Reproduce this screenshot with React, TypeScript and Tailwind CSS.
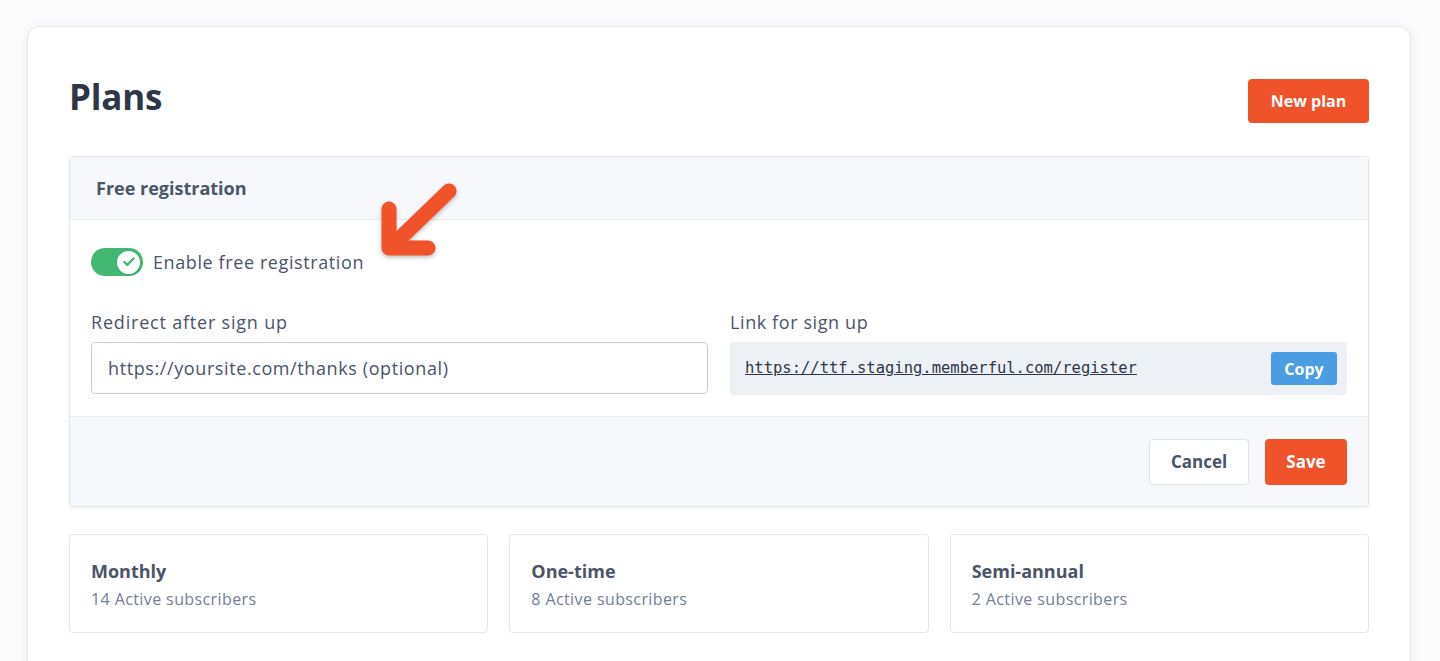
import { Check } from "lucide-react";

const plans = [
  { name: "Monthly", subs: "14 Active subscribers" },
  { name: "One-time", subs: "8 Active subscribers" },
  { name: "Semi-annual", subs: "2 Active subscribers" },
];

function Arrow() {
  return (
    <svg
      className="absolute left-[344px] top-[149px] pointer-events-none"
      width="100"
      height="92"
      viewBox="0 0 100 92"
      style={{ filter: "drop-shadow(0 2px 2px rgba(0,0,0,0.25))" }}
    >
      <g fill="none" stroke="#f05229" strokeWidth="15" strokeLinecap="round" strokeLinejoin="round">
        <path d="M77 15 L19 71" />
        <path d="M17 33 L17 72 L56 72" />
      </g>
    </svg>
  );
}

export default function App() {
  return (
    <main
      className="min-h-screen bg-[#fcfcfd] pt-[26px] pl-[27px] pr-[29px] text-[#4a5568]"
      style={{ fontFamily: "'Open Sans', Lato, sans-serif" }}
    >
      <div className="relative bg-white border border-[#e4e7ed] rounded-[12px] shadow-[0_0_12px_rgba(30,40,60,0.06)] px-[41px] pt-[52px] pb-10 min-h-[700px]">
        <header className="flex items-center justify-between h-[44px] mb-[33px]">
          <h1 className="text-[35px] font-bold text-[#2d3748] tracking-[-0.2px] pb-[8px]">Plans</h1>
          <button className="h-[44px] w-[121px] rounded-[4px] bg-[#f05229] text-white font-bold text-[16px]">
            New plan
          </button>
        </header>

        <section className="border border-[#e2e7ee] rounded-[4px] shadow-[0_1px_3px_rgba(30,40,60,0.08)] overflow-hidden">
          <div className="h-[63px] bg-[#f6f8fb] border-b border-[#e9edf2] flex items-center px-[26px]">
            <h3 className="text-[18px] font-bold text-[#4a5568]">Free registration</h3>
          </div>

          <div className="px-[21px] pt-[28px] pb-[21px]">
            <label className="flex items-center gap-[10px] h-[28px]">
              <span className="relative w-[52px] h-[28px] rounded-full bg-[#42b873] flex items-center justify-end pr-[3px]">
                <span className="w-[23px] h-[23px] rounded-full bg-white flex items-center justify-center shadow-sm">
                  <Check size={14} strokeWidth={4} color="#42b873" />
                </span>
              </span>
              <span className="text-[18px] tracking-[0.6px] text-[#4a5568]">Enable free registration</span>
            </label>

            <div className="grid grid-cols-2 gap-[22px] mt-[35px]">
              <div>
                <div className="text-[18px] leading-[22px] mb-[9px] tracking-[0.8px]">Redirect after sign up</div>
                <input
                  className="w-full h-[52px] border border-[#c9cdd3] rounded-[4px] px-[16px] text-[18px] tracking-[0.6px] text-[#4a5568] placeholder:text-[#4a5568] outline-none"
                  placeholder="https://yoursite.com/thanks (optional)"
                />
              </div>
              <div>
                <div className="text-[18px] leading-[22px] mb-[9px] tracking-[0.6px]">Link for sign up</div>
                <div className="h-[53px] bg-[#edf1f6] rounded-[4px] flex items-center justify-between pl-[15px] pr-[10px]">
                  <span
                    className="underline text-[15.5px] text-[#2d3748]"
                    style={{ fontFamily: "'DejaVu Sans Mono', monospace" }}
                  >
                    https://ttf.staging.memberful.com/register
                  </span>
                  <button className="h-[33px] w-[66px] rounded-[3px] bg-[#4a9de2] text-white font-bold text-[16px]">
                    Copy
                  </button>
                </div>
              </div>
            </div>
          </div>

          <div className="h-[90px] bg-[#f6f8fb] border-t border-[#e9edf2] flex items-center justify-end gap-[16px] px-[21px]">
            <button className="h-[46px] w-[100px] rounded-[4px] bg-white border border-[#dfe3e9] text-[#4a5568] font-bold text-[17px]">
              Cancel
            </button>
            <button className="h-[46px] w-[82px] rounded-[4px] bg-[#f05229] text-white font-bold text-[17px]">
              Save
            </button>
          </div>
        </section>

        <div className="grid grid-cols-3 gap-[21px] mt-[27px]">
          {plans.map((p) => (
            <div key={p.name} className="h-[99px] border border-[#e2e7ee] rounded-[4px] px-[21px] pt-[24px]">
              <div className="text-[18px] font-bold text-[#4a5568] leading-[24px]">{p.name}</div>
              <div className="text-[16px] tracking-[0.4px] text-[#718096] leading-[22px] mt-[5px]">{p.subs}</div>
            </div>
          ))}
        </div>

        <Arrow />
      </div>
    </main>
  );
}
